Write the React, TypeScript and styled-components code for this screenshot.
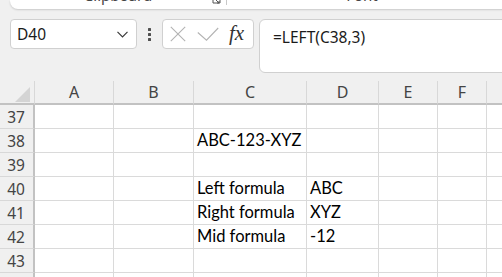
import React from "react";
import styled, { createGlobalStyle } from "styled-components";

const Global = createGlobalStyle`
  html, body { margin: 0; padding: 0; background: #f0f0f0; overflow: hidden; }
  #root { width: 502px; height: 277px; }
`;

const Page = styled.div`
  width: 502px;
  height: 277px;
  overflow: hidden;
  display: flex;
  flex-direction: column;
  background: #f0f0f0;
  font-family: "Noto Sans", "Open Sans", sans-serif;
`;

const Ribbon = styled.div`
  flex: none;
  height: 9px;
  margin-left: 10px;
  margin-right: -20px;
  background: #fff;
  border-bottom-left-radius: 8px;
  box-shadow: 0 1px 2px rgba(0, 0, 0, 0.16);
  overflow: hidden;
  display: flex;
`;

const RibbonGroup = styled.div<{ $w: number }>`
  flex: none;
  width: ${(p) => p.$w}px;
  display: flex;
  align-items: flex-start;
  justify-content: center;
  position: relative;
`;

const GroupLabel = styled.div`
  margin-top: -15px;
  font-size: 15px;
  line-height: 20px;
  color: #444;
  white-space: nowrap;
`;

const Launcher = styled.svg`
  position: absolute;
  right: 5px;
  top: -5px;
`;

const Separator = styled.div`
  flex: none;
  width: 1px;
  height: 5px;
  background: #c8c8c8;
`;

const FormulaBar = styled.div`
  flex: none;
  display: flex;
  align-items: flex-start;
  margin-top: 10px;
  padding-left: 10px;
  height: 54px;
`;

const NameBox = styled.div`
  flex: none;
  box-sizing: border-box;
  width: 127px;
  height: 30px;
  border: 1px solid #d0d0d0;
  border-radius: 4px;
  background: #fff;
  display: flex;
  align-items: center;
  justify-content: space-between;
  padding: 0 8px 0 6px;
  font-size: 15.5px;
  color: #1b1b1b;
`;

const Dots = styled.div`
  flex: none;
  display: flex;
  flex-direction: column;
  gap: 2px;
  margin: 9px 11px 0 11px;
`;

const Dot = styled.span`
  width: 3px;
  height: 3px;
  background: #505050;
  border-radius: 0.5px;
`;

const FxBox = styled.div`
  flex: none;
  box-sizing: border-box;
  width: 92px;
  height: 30px;
  border: 1px solid #d0d0d0;
  border-radius: 4px;
  background: #fff;
  display: flex;
  align-items: center;
  padding-left: 7px;
`;

const CheckIcon = styled.svg`
  margin-left: 11px;
`;

const FxText = styled.span`
  margin-left: 10px;
  font-family: "Liberation Serif", "DejaVu Serif", serif;
  font-style: italic;
  font-size: 21px;
  color: #333;
  line-height: 20px;
  margin-top: -2px;
`;

const FormulaInput = styled.div`
  flex: 1;
  box-sizing: border-box;
  height: 54px;
  margin-left: 5px;
  margin-right: -14px;
  border: 1px solid #d0d0d0;
  border-radius: 6px;
  background: #fff;
  padding: 7px 0 0 13px;
  font-size: 15.5px;
  line-height: 20px;
  color: #1b1b1b;
`;

const Sheet = styled.div`
  flex: none;
  margin-top: 8px;
  display: grid;
  grid-template-columns: 35px 79px 80px 113px 72px 59px 49px 80px;
  grid-auto-rows: 24px;
  background: #fff;
`;

const Corner = styled.div`
  box-sizing: border-box;
  background: #f0f0f0;
  border-right: 1px solid #d8d8d8;
  border-bottom: 2px solid #c2c2c2;
  display: flex;
  align-items: flex-end;
  justify-content: flex-end;
  padding: 0 4px 1px 0;
`;

const ColHeader = styled.div`
  box-sizing: border-box;
  background: #f0f0f0;
  border-right: 1px solid #d8d8d8;
  border-bottom: 2px solid #c2c2c2;
  display: flex;
  align-items: center;
  justify-content: center;
  font-size: 16px;
  color: #444;
`;

const RowHeader = styled.div`
  box-sizing: border-box;
  background: #f0f0f0;
  border-right: 2px solid #c2c2c2;
  border-bottom: 1px solid #d8d8d8;
  display: flex;
  align-items: center;
  justify-content: center;
  padding-right: 1px;
  font-size: 15.5px;
  color: #444;
`;

const Cell = styled.div`
  box-sizing: border-box;
  border-right: 1px solid #dadada;
  border-bottom: 1px solid #dadada;
  padding: 0 0 0 3px;
  font-family: "Lato", "Carlito", sans-serif;
  font-size: 16.5px;
  line-height: 23px;
  color: #000;
  white-space: nowrap;
  overflow: visible;
`;

const columns = ["A", "B", "C", "D", "E", "F", "G"];

const data: Record<number, Record<string, string>> = {
  38: { C: "ABC-123-XYZ" },
  40: { C: "Left formula", D: "ABC" },
  41: { C: "Right formula", D: "XYZ" },
  42: { C: "Mid formula", D: "-12" },
};

const rows = [37, 38, 39, 40, 41, 42, 43];

export default function App() {
  return (
    <>
      <Global />
      <Page>
        <Ribbon>
          <RibbonGroup $w={216}>
            <GroupLabel>Clipboard</GroupLabel>
            <Launcher width="9" height="9" viewBox="0 0 9 9">
              <path d="M1 1v7h7V1" fill="none" stroke="#555" strokeWidth="1" />
              <path d="M4 5l3 3M7 6v2H5" fill="none" stroke="#555" strokeWidth="1" />
            </Launcher>
          </RibbonGroup>
          <Separator />
          <RibbonGroup $w={270}>
            <GroupLabel>Font</GroupLabel>
          </RibbonGroup>
        </Ribbon>

        <FormulaBar>
          <NameBox>
            <span>D40</span>
            <svg width="11" height="7" viewBox="0 0 11 7">
              <path d="M0.5 0.8L5.5 5.8L10.5 0.8" fill="none" stroke="#3a3a3a" strokeWidth="1.2" />
            </svg>
          </NameBox>
          <Dots>
            <Dot />
            <Dot />
            <Dot />
          </Dots>
          <FxBox>
            <svg width="16" height="16" viewBox="0 0 16 16">
              <path d="M0.8 0.8L15.2 15.2M15.2 0.8L0.8 15.2" fill="none" stroke="#b3b3b3" strokeWidth="1.1" />
            </svg>
            <CheckIcon width="22" height="14" viewBox="0 0 22 14">
              <path d="M0.8 5.5L9.5 13.2L21.2 1" fill="none" stroke="#b3b3b3" strokeWidth="1.1" />
            </CheckIcon>
            <FxText>fx</FxText>
          </FxBox>
          <FormulaInput>=LEFT(C38,3)</FormulaInput>
        </FormulaBar>

        <Sheet>
          <Corner>
            <svg width="15" height="15" viewBox="0 0 15 15">
              <polygon points="15,0 15,15 0,15" fill="#d4d4d4" />
            </svg>
          </Corner>
          {columns.map((c) => (
            <ColHeader key={c}>{c}</ColHeader>
          ))}
          {rows.map((r) => (
            <React.Fragment key={r}>
              <RowHeader>{r}</RowHeader>
              {columns.map((c) => (
                <Cell key={c}>{data[r]?.[c] ?? ""}</Cell>
              ))}
            </React.Fragment>
          ))}
          <RowHeader />
          {columns.map((c) => (
            <Cell key={`end-${c}`} />
          ))}
        </Sheet>
      </Page>
    </>
  );
}
